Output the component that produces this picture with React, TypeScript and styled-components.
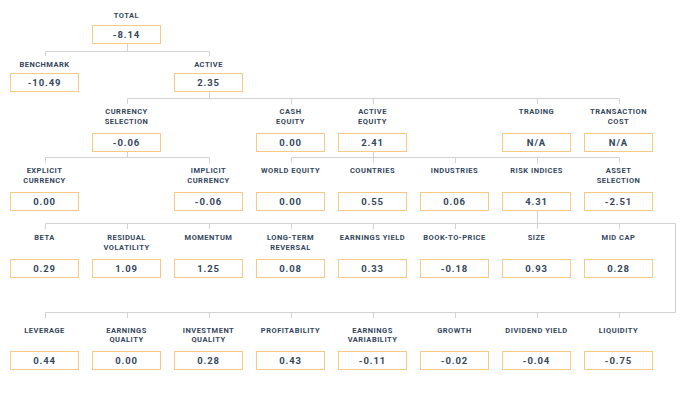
import React from 'react';
import styled, { createGlobalStyle } from 'styled-components';

// attribution tree: tiers of nodes on an 8-column grid, connectors drawn as svg

interface TreeNode {
    col: number;
    label: string;
    value: string;
}

interface Tier {
    gap: number;
    labelHeight: number;
    lineHeight?: number;
    nodes: TreeNode[];
}

const COL_W = 69;
const PITCH = 82;
const LEFT = 10;

const tiers: Tier[] = [
    {
        gap: 11,
        labelHeight: 14,
        nodes: [{ col: 1, label: 'TOTAL', value: '-8.14' }],
    },
    {
        gap: 16,
        labelHeight: 13,
        nodes: [
            { col: 0, label: 'BENCHMARK', value: '-10.49' },
            { col: 2, label: 'ACTIVE', value: '2.35' },
        ],
    },
    {
        gap: 15,
        labelHeight: 26,
        nodes: [
            { col: 1, label: 'CURRENCY\nSELECTION', value: '-0.06' },
            { col: 3, label: 'CASH\nEQUITY', value: '0.00' },
            { col: 4, label: 'ACTIVE\nEQUITY', value: '2.41' },
            { col: 6, label: 'TRADING', value: 'N/A' },
            { col: 7, label: 'TRANSACTION\nCOST', value: 'N/A' },
        ],
    },
    {
        gap: 14,
        labelHeight: 26,
        nodes: [
            { col: 0, label: 'EXPLICIT\nCURRENCY', value: '0.00' },
            { col: 2, label: 'IMPLICIT\nCURRENCY', value: '-0.06' },
            { col: 3, label: 'WORLD EQUITY', value: '0.00' },
            { col: 4, label: 'COUNTRIES', value: '0.55' },
            { col: 5, label: 'INDUSTRIES', value: '0.06' },
            { col: 6, label: 'RISK INDICES', value: '4.31' },
            { col: 7, label: 'ASSET\nSELECTION', value: '-2.51' },
        ],
    },
    {
        gap: 22,
        labelHeight: 26,
        nodes: [
            { col: 0, label: 'BETA', value: '0.29' },
            { col: 1, label: 'RESIDUAL\nVOLATILITY', value: '1.09' },
            { col: 2, label: 'MOMENTUM', value: '1.25' },
            { col: 3, label: 'LONG-TERM\nREVERSAL', value: '0.08' },
            { col: 4, label: 'EARNINGS YIELD', value: '0.33' },
            { col: 5, label: 'BOOK-TO-PRICE', value: '-0.18' },
            { col: 6, label: 'SIZE', value: '0.93' },
            { col: 7, label: 'MID CAP', value: '0.28' },
        ],
    },
    {
        gap: 48,
        labelHeight: 25,
        lineHeight: 9,
        nodes: [
            { col: 0, label: 'LEVERAGE', value: '0.44' },
            { col: 1, label: 'EARNINGS\nQUALITY', value: '0.00' },
            { col: 2, label: 'INVESTMENT\nQUALITY', value: '0.28' },
            { col: 3, label: 'PROFITABILITY', value: '0.43' },
            { col: 4, label: 'EARNINGS\nVARIABILITY', value: '-0.11' },
            { col: 5, label: 'GROWTH', value: '-0.02' },
            { col: 6, label: 'DIVIDEND YIELD', value: '-0.04' },
            { col: 7, label: 'LIQUIDITY', value: '-0.75' },
        ],
    },
];

const GlobalStyle = createGlobalStyle`
    html, body {
        margin: 0;
        padding: 0;
        background: #ffffff;
    }
    body {
        font-family: Roboto, "Liberation Sans", Arial, sans-serif;
    }
`;

const Canvas = styled.div`
    position: relative;
    width: 690px;
    height: 400px;
    overflow: hidden;
    display: flex;
    flex-direction: column;
`;

const Connectors = styled.svg`
    position: absolute;
    inset: 0;
    width: 690px;
    height: 400px;
    pointer-events: none;
`;

const TierRow = styled.div<{ $gap: number }>`
    display: grid;
    grid-template-columns: repeat(8, ${COL_W}px);
    column-gap: ${PITCH - COL_W}px;
    padding: ${p => p.$gap}px 0 0 ${LEFT}px;
    position: relative;
`;

const Node = styled.div<{ $col: number }>`
    grid-column: ${p => p.$col + 1};
    display: flex;
    flex-direction: column;
    align-items: center;
`;

const Label = styled.div<{ $height: number; $line: number }>`
    height: ${p => p.$height}px;
    font-size: 7.5px;
    line-height: ${p => p.$line}px;
    font-weight: 700;
    letter-spacing: 0.5px;
    color: #34475b;
    text-align: center;
    white-space: pre;
`;

const ValueBox = styled.div`
    box-sizing: border-box;
    width: ${COL_W}px;
    height: 19px;
    border: 1.5px solid #f6ca82;
    background: #ffffff;
    display: flex;
    align-items: center;
    justify-content: center;
    font-size: 9.5px;
    font-weight: 700;
    letter-spacing: 0.9px;
    color: #34475b;
`;

const cx = (col: number) => LEFT + col * PITCH + 34.5;

// line segments [x1, y1, x2, y2]
const segments: number[][] = (() => {
    const s: number[][] = [];
    const bracket = (parentCol: number, fromY: number, barY: number, dropY: number, cols: number[], x2?: number) => {
        s.push([cx(parentCol), fromY, cx(parentCol), barY]);
        const xs = cols.map(cx);
        s.push([Math.min(...xs), barY, x2 ?? Math.max(...xs), barY]);
        cols.forEach(c => s.push([cx(c), barY, cx(c), dropY]));
    };
    bracket(1, 44, 51.5, 56, [0, 2]);
    bracket(2, 92, 98.5, 104, [1, 3, 4, 6, 7]);
    bracket(1, 152, 157.5, 163, [0, 2]);
    bracket(4, 152, 157.5, 163, [3, 4, 5, 6, 7]);
    const all = [0, 1, 2, 3, 4, 5, 6, 7];
    bracket(6, 211, 223.5, 229, all, 674.5);
    s.push([674.5, 223.5, 674.5, 312.5]);
    s.push([cx(0), 312.5, 674.5, 312.5]);
    all.forEach(c => s.push([cx(c), 312.5, cx(c), 318]));
    return s;
})();

export default function App() {
    return (
        <>
            <GlobalStyle />
            <Canvas>
                <Connectors viewBox="0 0 690 400">
                    {segments.map(([x1, y1, x2, y2], i) => (
                        <line
                            key={i}
                            x1={Math.round(x1) + 0.5}
                            y1={y1}
                            x2={Math.round(x2) + 0.5}
                            y2={y2}
                            stroke="#d2d2d2"
                            strokeWidth={1}
                        />
                    ))}
                </Connectors>
                {tiers.map((tier, t) => (
                    <TierRow key={t} $gap={tier.gap}>
                        {tier.nodes.map(node => (
                            <Node key={node.label} $col={node.col}>
                                <Label $height={tier.labelHeight} $line={tier.lineHeight ?? 10}>
                                    {node.label}
                                </Label>
                                <ValueBox>{node.value}</ValueBox>
                            </Node>
                        ))}
                    </TierRow>
                ))}
            </Canvas>
        </>
    );
}
